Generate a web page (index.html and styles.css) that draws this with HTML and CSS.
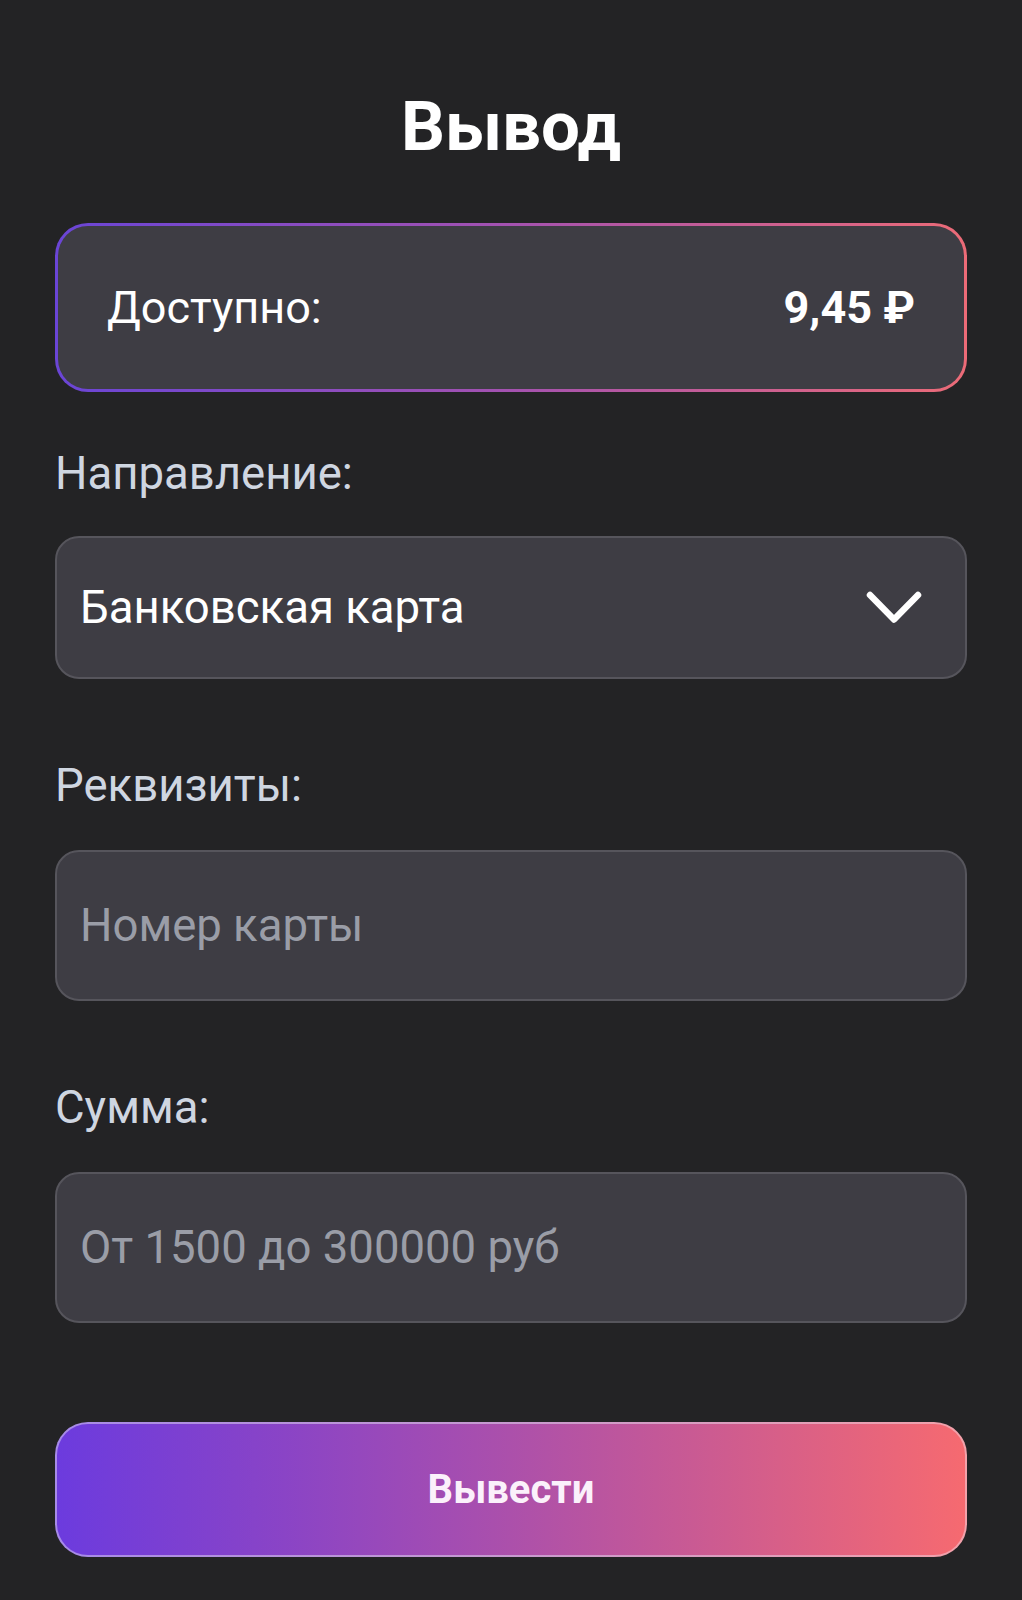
FILE: index.html
```html
<!DOCTYPE html>
<html lang="ru">
<head>
<meta charset="utf-8">
<title>Вывод</title>
<link rel="stylesheet" href="styles.css">
</head>
<body>
<main class="page">
  <h1 class="title">Вывод</h1>

  <div class="balance">
    <span class="balance-label">Доступно:</span>
    <span class="balance-value">9,45 ₽</span>
  </div>

  <div class="field field-first">
    <div class="label label-select">Направление:</div>
    <div class="select">
      <span class="select-value">Банковская карта</span>
      <svg class="chevron" width="56" height="33" viewBox="0 0 56 33" aria-hidden="true">
        <polyline points="4,4 28,28.5 52,4" fill="none" stroke="#ffffff" stroke-width="6.5" stroke-linecap="round" stroke-linejoin="round"/>
      </svg>
    </div>
  </div>

  <div class="field">
    <div class="label">Реквизиты:</div>
    <input class="input" type="text" placeholder="Номер карты">
  </div>

  <div class="field">
    <div class="label">Сумма:</div>
    <input class="input" type="text" placeholder="От 1500 до 300000 руб">
  </div>

  <button class="btn" type="button">Вывести</button>
</main>
</body>
</html>
```

FILE: styles.css
```css
* {
  box-sizing: border-box;
}

html, body {
  margin: 0;
  padding: 0;
  background: #232325;
}

body {
  font-family: Roboto, "Noto Sans", "Liberation Sans", sans-serif;
  color: #ffffff;
}

.page {
  padding: 85px 55px 40px;
  display: flex;
  flex-direction: column;
}

.title {
  margin: 0;
  font-size: 69px;
  line-height: 83px;
  font-weight: 700;
  text-align: center;
  color: #ffffff;
}

.balance {
  margin-top: 55px;
  height: 169px;
  border: 3px solid transparent;
  border-radius: 33px;
  background:
    linear-gradient(#3e3d44, #3e3d44) padding-box,
    linear-gradient(90deg, #6a45d6 0%, #a452b0 50%, #ec6b77 100%) border-box;
  padding: 0 49px 0 49px;
  display: flex;
  align-items: center;
  justify-content: space-between;
}

.balance-label {
  font-size: 45px;
  line-height: 52px;
  font-weight: 400;
  color: #ffffff;
}

.balance-value {
  font-size: 45px;
  line-height: 52px;
  font-weight: 700;
  color: #ffffff;
}

.field {
  margin-top: 81px;
  display: flex;
  flex-direction: column;
}

.field-first {
  margin-top: 56px;
}

.label {
  font-size: 45.5px;
  line-height: 52px;
  color: #cfd6e1;
  margin-bottom: 38px;
}

.label-select {
  margin-bottom: 36px;
}

.select {
  height: 143px;
  border: 2px solid #56555c;
  border-radius: 24px;
  background: #3e3d44;
  padding: 0 43px 0 23px;
  display: flex;
  align-items: center;
  justify-content: space-between;
}

.select-value {
  font-size: 45.5px;
  line-height: 52px;
  color: #ffffff;
}

.chevron {
  display: block;
  flex: none;
}

.input {
  display: block;
  width: 100%;
  height: 151px;
  border: 2px solid #56555c;
  border-radius: 24px;
  background: #3e3d44;
  padding: 0 23px;
  margin: 0;
  font-family: inherit;
  font-size: 45.5px;
  color: #ffffff;
  outline: none;
}

.input::placeholder {
  color: #9a9da7;
  opacity: 1;
}

.btn {
  margin-top: 99px;
  height: 135px;
  width: 100%;
  border: 2px solid transparent;
  border-radius: 33px;
  background:
    linear-gradient(90deg, #6c3bde 0%, #8a44c6 25%, #a94fad 48%, #cc5b91 72%, #f66a70 100%) padding-box,
    linear-gradient(90deg, #a68ae8 0%, #c79ad0 50%, #f3a1aa 100%) border-box;
  font-family: inherit;
  font-size: 40px;
  font-weight: 700;
  color: #fbf1fb;
  cursor: pointer;
  padding: 0;
}
```
